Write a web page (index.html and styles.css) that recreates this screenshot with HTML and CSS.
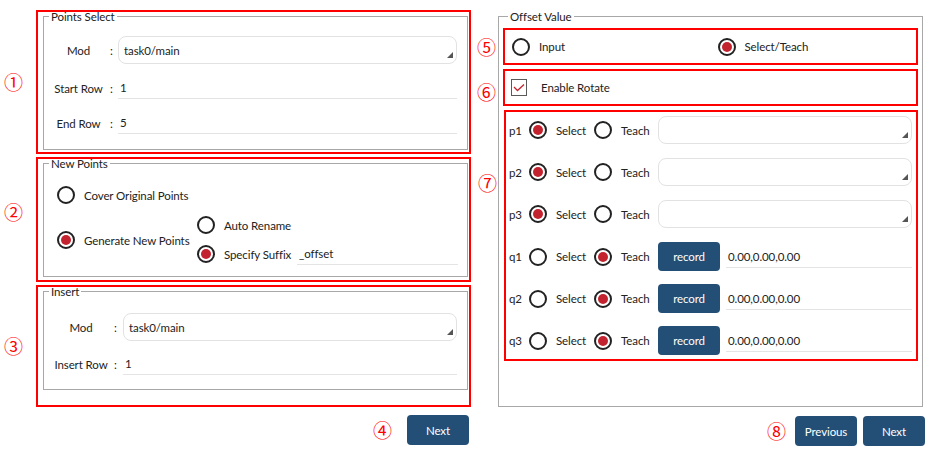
FILE: index.html
```html
<!DOCTYPE html>
<html lang="en">
	<head>
		<meta charset="UTF-8">
		<title>Offset Points</title>
		<link rel="stylesheet" href="styles.css">
	</head>
	<body>
		<div class="page">
			<div class="col-left">
				<div class="mark-row">
					<span class="num">①</span>
					<div class="mark mark-select">
						<fieldset class="group group-select">
							<legend>Points Select</legend>
							<div class="form-grid">
								<span class="f-label">Mod</span>
								<span class="f-colon">:</span>
								<div class="combo">
									<span>task0/main</span>
									<svg class="combo-arrow" width="6" height="6" viewBox="0 0 6 6"><polygon points="6,0 6,6 0,6" fill="#555"/></svg>
								</div>
								<span class="f-label">Start Row</span>
								<span class="f-colon">:</span>
								<div class="line-field">1</div>
								<span class="f-label">End Row</span>
								<span class="f-colon">:</span>
								<div class="line-field">5</div>
							</div>
						</fieldset>
					</div>
				</div>

				<div class="mark-row">
					<span class="num num-up">②</span>
					<div class="mark mark-new">
						<fieldset class="group group-new">
							<legend>New Points</legend>
							<div class="np-body">
								<label class="radio"><span class="dot"></span>Cover Original Points</label>
								<div class="np-gen">
									<label class="radio gen"><span class="dot on"></span>Generate New Points</label>
									<div class="np-sub">
										<label class="radio"><span class="dot"></span>Auto Rename</label>
										<div class="np-suffix">
											<label class="radio"><span class="dot on"></span>Specify Suffix</label>
											<div class="line-field">_offset</div>
										</div>
									</div>
								</div>
							</div>
						</fieldset>
					</div>
				</div>

				<div class="mark-row">
					<span class="num">③</span>
					<div class="mark mark-insert">
						<fieldset class="group group-insert">
							<legend>Insert</legend>
							<div class="form-grid form-insert">
								<span class="f-label">Mod</span>
								<span class="f-colon">:</span>
								<div class="combo">
									<span>task0/main</span>
									<svg class="combo-arrow" width="6" height="6" viewBox="0 0 6 6"><polygon points="6,0 6,6 0,6" fill="#555"/></svg>
								</div>
								<span class="f-label">Insert Row</span>
								<span class="f-colon">:</span>
								<div class="line-field">1</div>
							</div>
						</fieldset>
					</div>
				</div>

				<div class="btn-row btn-row-left">
					<span class="num">④</span>
					<button class="btn">Next</button>
				</div>
			</div>

			<div class="col-right">
				<fieldset class="group group-offset">
					<legend>Offset Value</legend>

					<div class="mark mark-mode">
						<span class="num num-side n5">⑤</span>
						<label class="radio"><span class="dot"></span>Input</label>
						<label class="radio"><span class="dot on"></span>Select/Teach</label>
					</div>

					<div class="mark mark-rotate">
						<span class="num num-side n6">⑥</span>
						<span class="check">
							<svg width="12" height="10" viewBox="0 0 12 10"><polyline points="1,4 4.5,7.5 11,1.5" fill="none" stroke="#c3232f" stroke-width="1.3"/></svg>
						</span>
						<span>Enable Rotate</span>
					</div>

					<div class="mark mark-points">
						<span class="num num-side n7">⑦</span>

						<div class="pt-row">
							<span class="pt-name">p1</span>
							<label class="radio"><span class="dot on"></span>Select</label>
							<label class="radio"><span class="dot"></span>Teach</label>
							<div class="combo">
								<span></span>
								<svg class="combo-arrow" width="6" height="6" viewBox="0 0 6 6"><polygon points="6,0 6,6 0,6" fill="#555"/></svg>
							</div>
						</div>
						<div class="pt-row">
							<span class="pt-name">p2</span>
							<label class="radio"><span class="dot on"></span>Select</label>
							<label class="radio"><span class="dot"></span>Teach</label>
							<div class="combo">
								<span></span>
								<svg class="combo-arrow" width="6" height="6" viewBox="0 0 6 6"><polygon points="6,0 6,6 0,6" fill="#555"/></svg>
							</div>
						</div>
						<div class="pt-row">
							<span class="pt-name">p3</span>
							<label class="radio"><span class="dot on"></span>Select</label>
							<label class="radio"><span class="dot"></span>Teach</label>
							<div class="combo">
								<span></span>
								<svg class="combo-arrow" width="6" height="6" viewBox="0 0 6 6"><polygon points="6,0 6,6 0,6" fill="#555"/></svg>
							</div>
						</div>
						<div class="pt-row">
							<span class="pt-name">q1</span>
							<label class="radio"><span class="dot"></span>Select</label>
							<label class="radio"><span class="dot on"></span>Teach</label>
							<div class="pt-teach">
								<button class="btn btn-record">record</button>
								<div class="line-field">0.00,0.00,0.00</div>
							</div>
						</div>
						<div class="pt-row">
							<span class="pt-name">q2</span>
							<label class="radio"><span class="dot"></span>Select</label>
							<label class="radio"><span class="dot on"></span>Teach</label>
							<div class="pt-teach">
								<button class="btn btn-record">record</button>
								<div class="line-field">0.00,0.00,0.00</div>
							</div>
						</div>
						<div class="pt-row">
							<span class="pt-name">q3</span>
							<label class="radio"><span class="dot"></span>Select</label>
							<label class="radio"><span class="dot on"></span>Teach</label>
							<div class="pt-teach">
								<button class="btn btn-record">record</button>
								<div class="line-field">0.00,0.00,0.00</div>
							</div>
						</div>
					</div>
				</fieldset>

				<div class="btn-row btn-row-right">
					<span class="num">⑧</span>
					<button class="btn">Previous</button>
					<button class="btn">Next</button>
				</div>
			</div>
		</div>
	</body>
</html>
```

FILE: styles.css
```css
* {
    margin: 0;
    padding: 0;
    box-sizing: border-box;
}

body {
    font-family: 'Lato', 'Noto Sans', sans-serif;
    font-size: 11.5px;
    letter-spacing: -0.1px;
    color: #222;
    background: #fff;
}

.page {
    display: flex;
    width: 927px;
    height: 459px;
}

.col-left {
    width: 471px;
    padding-top: 10px;
    display: flex;
    flex-direction: column;
}

.col-right {
    width: 427px;
    margin-left: 27px;
    padding-top: 12px;
    display: flex;
    flex-direction: column;
}

/* red annotation frames and numbers */
.mark {
    border: 2px solid #ff0000;
    position: relative;
}

.num {
    font-family: 'Noto Sans CJK SC', sans-serif;
    font-size: 19px;
    line-height: 18px;
    letter-spacing: 0;
    color: #ff0000;
}

.mark-row {
    display: flex;
    align-items: center;
}

.mark-row + .mark-row {
    margin-top: 3px;
}

.mark-row > .num {
    width: 36px;
    padding-left: 4px;
}

.num-up {
    margin-bottom: 16px;
}

.num-side {
    position: absolute;
    left: -28px;
}

.n5 { top: 8px; }
.n6 { top: 12px; }
.n7 { top: 62px; }

.mark-select {
    width: 435px;
    height: 144px;
    padding: 0 1px 0 5px;
}

.mark-new {
    width: 435px;
    height: 125px;
    padding: 0 1px 0 5px;
}

.mark-insert {
    width: 435px;
    height: 122px;
    padding: 0 1px 0 5px;
}

/* group boxes */
.group {
    border: 1px solid #a8a8a8;
    min-width: 0;
}

.group legend {
    margin-left: 5px;
    padding: 0 2px;
    font-size: 11.5px;
    line-height: 9px;
}

.group-select { height: 138px; }
.group-new { height: 118px; }
.group-insert { height: 103px; }

.form-grid {
    display: grid;
    grid-template-columns: 57px 11px 1fr;
    align-items: center;
    row-gap: 13px;
    padding: 15px 10px 0 6px;
}

.form-insert {
    grid-template-columns: 62px 11px 1fr;
    row-gap: 12px;
    padding-top: 17px;
}

.f-label {
    text-align: center;
}

.f-colon {
    padding-left: 3px;
}

.form-insert .f-colon {
    padding-left: 2px;
}

.combo {
    height: 28px;
    border: 1.5px solid #e2e2e2;
    border-radius: 8px;
    background: #fff;
    display: flex;
    align-items: center;
    justify-content: space-between;
    padding: 0 3px 0 5px;
}

.combo-arrow {
    align-self: flex-end;
    margin-bottom: 5px;
}

.line-field {
    height: 22px;
    line-height: 21px;
    padding-left: 2px;
    border-bottom: 1.5px solid #e4e4e4;
}

/* radios */
.radio {
    display: flex;
    align-items: center;
    gap: 9px;
    height: 20px;
}

.dot {
    width: 18px;
    height: 18px;
    border: 2px solid #222;
    border-radius: 50%;
    flex-shrink: 0;
    padding: 2px;
}

.dot.on::after {
    content: '';
    display: block;
    width: 10px;
    height: 10px;
    border-radius: 50%;
    background: #c3232f;
}

.np-body {
    display: flex;
    flex-direction: column;
    gap: 10px;
    padding: 17px 9px 0 13px;
}

.np-gen {
    display: flex;
    align-items: center;
}

.np-gen .gen {
    width: 140px;
}

.np-sub {
    flex: 1;
    display: flex;
    flex-direction: column;
    gap: 8px;
}

.np-suffix {
    display: flex;
    align-items: center;
}

.np-suffix .radio {
    width: 100px;
}

.np-suffix .line-field {
    flex: 1;
}

/* offset value */
.group-offset {
    height: 395px;
    margin-right: 2px;
    padding: 7px 4px 0 4px;
}

.mark-mode {
    height: 37px;
    display: grid;
    grid-template-columns: 1fr 1fr;
    align-items: center;
}

.mark-mode .radio {
    padding-left: 7px;
}

.mark-rotate {
    height: 37px;
    margin-top: 4px;
    display: flex;
    align-items: center;
    padding-left: 6px;
    gap: 14px;
}

.check {
    width: 16px;
    height: 17px;
    border: 1.5px solid #5a5a5a;
    display: flex;
    align-items: center;
    justify-content: center;
}

.mark-points {
    height: 251px;
    margin-top: 4px;
    margin-left: 1px;
    padding: 4px 4px 0 3px;
    display: flex;
    flex-direction: column;
    gap: 14px;
}

.pt-row {
    display: grid;
    grid-template-columns: 20px 65px 64px 1fr;
    align-items: center;
    height: 28px;
}

.pt-teach {
    display: flex;
    align-items: center;
    gap: 6px;
}

.pt-teach .line-field {
    flex: 1;
}

/* buttons */
.btn-row {
    display: flex;
    align-items: center;
    justify-content: flex-end;
}

.btn-row-left {
    margin-top: 8px;
    padding-right: 2px;
    gap: 15px;
}

.btn-row-right {
    margin-top: 9px;
    gap: 6px;
}

.btn-row-right .num {
    margin-right: 3px;
}

.btn {
    width: 62px;
    height: 30px;
    border: none;
    border-radius: 4px;
    background: #234e75;
    color: #fff;
    font-family: 'Lato', 'Noto Sans', sans-serif;
    font-size: 11.5px;
    letter-spacing: -0.1px;
}

.btn-record {
    height: 29px;
    flex-shrink: 0;
}
```
